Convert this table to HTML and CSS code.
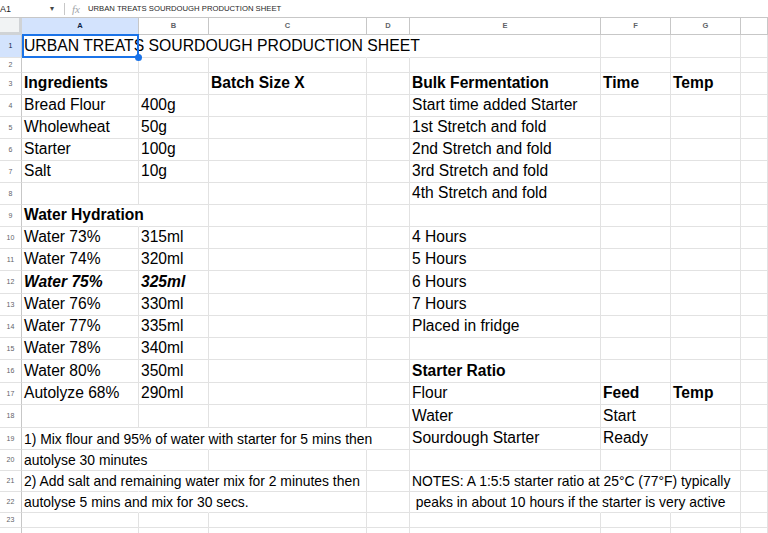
FILE: index.html
```html
<!DOCTYPE html>
<html>
<head>
<meta charset="utf-8">
<title>URBAN TREATS SOURDOUGH PRODUCTION SHEET</title>
<link rel="stylesheet" href="styles.css">
</head>
<body>
<div class="fbar">
  <span class="namebox">A1</span>
  <span class="caret">&#9662;</span>
  <span class="sep"></span>
  <span class="fx">fx</span>
  <span class="ftext">URBAN TREATS SOURDOUGH PRODUCTION SHEET</span>
</div>
<div class="sheet">
  <div class="corner"></div><div class="ch selh">A</div><div class="ch">B</div><div class="ch">C</div><div class="ch">D</div><div class="ch">E</div><div class="ch">F</div><div class="ch">G</div><div class="ch"></div>

  <div class="rh selh">1</div><div class="nr sel title">URBAN TREATS SOURDOUGH PRODUCTION SHEET</div><div class="nr"></div><div class="nr"></div><div class="nr"></div><div></div><div></div><div></div><div></div>

  <div class="rh">2</div><div></div><div></div><div></div><div></div><div></div><div></div><div></div><div></div>

  <div class="rh">3</div><div class="b">Ingredients</div><div></div><div class="b">Batch Size X</div><div></div><div class="b">Bulk Fermentation</div><div class="b">Time</div><div class="b">Temp</div><div></div>

  <div class="rh">4</div><div>Bread Flour</div><div>400g</div><div></div><div></div><div>Start time added Starter</div><div></div><div></div><div></div>

  <div class="rh">5</div><div>Wholewheat</div><div>50g</div><div></div><div></div><div>1st Stretch and fold</div><div></div><div></div><div></div>

  <div class="rh">6</div><div>Starter</div><div>100g</div><div></div><div></div><div>2nd Stretch and fold</div><div></div><div></div><div></div>

  <div class="rh">7</div><div>Salt</div><div>10g</div><div></div><div></div><div>3rd Stretch and fold</div><div></div><div></div><div></div>

  <div class="rh">8</div><div></div><div></div><div></div><div></div><div>4th Stretch and fold</div><div></div><div></div><div></div>

  <div class="rh">9</div><div class="b nr">Water Hydration</div><div></div><div></div><div></div><div></div><div></div><div></div><div></div>

  <div class="rh">10</div><div>Water 73%</div><div>315ml</div><div></div><div></div><div>4 Hours</div><div></div><div></div><div></div>

  <div class="rh">11</div><div>Water 74%</div><div>320ml</div><div></div><div></div><div>5 Hours</div><div></div><div></div><div></div>

  <div class="rh">12</div><div class="bi">Water 75%</div><div class="bi">325ml</div><div></div><div></div><div>6 Hours</div><div></div><div></div><div></div>

  <div class="rh">13</div><div>Water 76%</div><div>330ml</div><div></div><div></div><div>7 Hours</div><div></div><div></div><div></div>

  <div class="rh">14</div><div>Water 77%</div><div>335ml</div><div></div><div></div><div>Placed in fridge</div><div></div><div></div><div></div>

  <div class="rh">15</div><div>Water 78%</div><div>340ml</div><div></div><div></div><div></div><div></div><div></div><div></div>

  <div class="rh">16</div><div>Water 80%</div><div>350ml</div><div></div><div></div><div class="b">Starter Ratio</div><div></div><div></div><div></div>

  <div class="rh">17</div><div>Autolyze 68%</div><div>290ml</div><div></div><div></div><div>Flour</div><div class="b">Feed</div><div class="b">Temp</div><div></div>

  <div class="rh">18</div><div></div><div></div><div></div><div></div><div>Water</div><div>Start</div><div></div><div></div>

  <div class="rh">19</div><div class="s nr">1) Mix flour and 95% of water with starter for 5 mins then</div><div class="nr"></div><div class="nr"></div><div></div><div>Sourdough Starter</div><div>Ready</div><div></div><div></div>

  <div class="rh">20</div><div class="s nr">autolyse 30 minutes</div><div></div><div></div><div></div><div></div><div></div><div></div><div></div>

  <div class="rh">21</div><div class="s nr">2) Add salt and remaining water mix for 2 minutes then</div><div class="nr"></div><div></div><div></div><div class="s nr">NOTES: A 1:5:5 starter ratio at 25°C (77°F) typically</div><div class="nr"></div><div></div><div></div>

  <div class="rh">22</div><div class="s nr">autolyse 5 mins and mix for 30 secs.</div><div class="nr"></div><div></div><div></div><div class="s nr pre"> peaks in about 10 hours if the starter is very active</div><div class="nr"></div><div></div><div></div>

  <div class="rh">23</div><div></div><div></div><div></div><div></div><div></div><div></div><div></div><div></div>

  <div class="rh">24</div><div></div><div></div><div></div><div></div><div></div><div></div><div></div><div></div>
</div>
</body>
</html>
```

FILE: styles.css
```css
html, body {
  margin: 0;
  padding: 0;
  background: #ffffff;
}

body {
  width: 768px;
  height: 533px;
  overflow: hidden;
  font-family: "Liberation Sans", Arial, sans-serif;
  color: #000;
}

/* formula bar */
.fbar {
  height: 17px;
  border-bottom: 1px solid #c7c7c7;
  display: flex;
  align-items: center;
  font-size: 8px;
  color: #3c4043;
  white-space: nowrap;
}

.namebox {
  width: 50px;
  font-size: 9px;
  color: #1f1f1f;
}

.caret {
  width: 14px;
  font-size: 8px;
  color: #444746;
}

.sep {
  width: 1px;
  height: 12px;
  background: #c7c7c7;
  margin-right: 7px;
}

.fx {
  font-family: "Liberation Serif", serif;
  font-style: italic;
  font-size: 11px;
  color: #a0a4a8;
  margin-right: 7px;
  width: 9px;
}

.ftext {
  font-size: 7.7px;
  color: #1f1f1f;
}

/* grid */
.sheet {
  display: grid;
  grid-template-columns: 22px 117px 70px 158px 43px 191px 70px 70px 1fr;
  grid-template-rows:
    17px 23px 15px
    22px 22px 22px 22px 22px 22px 22px 22px 22px
    23px
    22px 22px 22px
    23px 22px 23px 22px
    21px 21px 21px
    15px 22px;
}

.sheet > div {
  box-sizing: border-box;
  min-width: 0;
  border-right: 1px solid #e2e2e2;
  border-bottom: 1px solid #e2e2e2;
  display: flex;
  align-items: flex-end;
  padding: 0 2px 2px 2px;
  font-size: 15.6px;
  line-height: 18px;
  white-space: nowrap;
}

.sheet > .title {
  font-size: 15.75px;
}

.sheet > .corner {
  background: #f1f3f4;
  border-right: 3px solid #d0d3d6;
  border-bottom: 3px solid #d0d3d6;
  padding: 0;
}

.sheet > .ch {
  justify-content: center;
  align-items: center;
  padding: 0;
  font-size: 7.5px;
  line-height: 10px;
  font-weight: bold;
  color: #5f6368;
  border-right-color: #c7c7c7;
  border-bottom-color: #c7c7c7;
}

.sheet > .rh {
  justify-content: center;
  align-items: center;
  padding: 0;
  font-size: 7px;
  line-height: 10px;
  color: #5f6368;
  border-right-color: #c7c7c7;
}

.sheet > .selh {
  background: #d3e3fd;
  color: #0b1f44;
}

.sheet > .nr {
  border-right-color: transparent;
}

.b {
  font-weight: bold;
}

.bi {
  font-weight: bold;
  font-style: italic;
}

.sheet > .s {
  font-size: 13.9px;
  line-height: 16px;
}

.pre {
  white-space: pre !important;
}

/* active cell selection */
.sel {
  position: relative;
}

.sel::after {
  content: "";
  position: absolute;
  left: 0;
  top: -1px;
  right: -1px;
  bottom: -1px;
  border: 2px solid #1a73e8;
}

.sel::before {
  content: "";
  position: absolute;
  right: -4px;
  bottom: -4px;
  width: 7px;
  height: 7px;
  border-radius: 50%;
  background: #1a73e8;
  z-index: 2;
}
```
